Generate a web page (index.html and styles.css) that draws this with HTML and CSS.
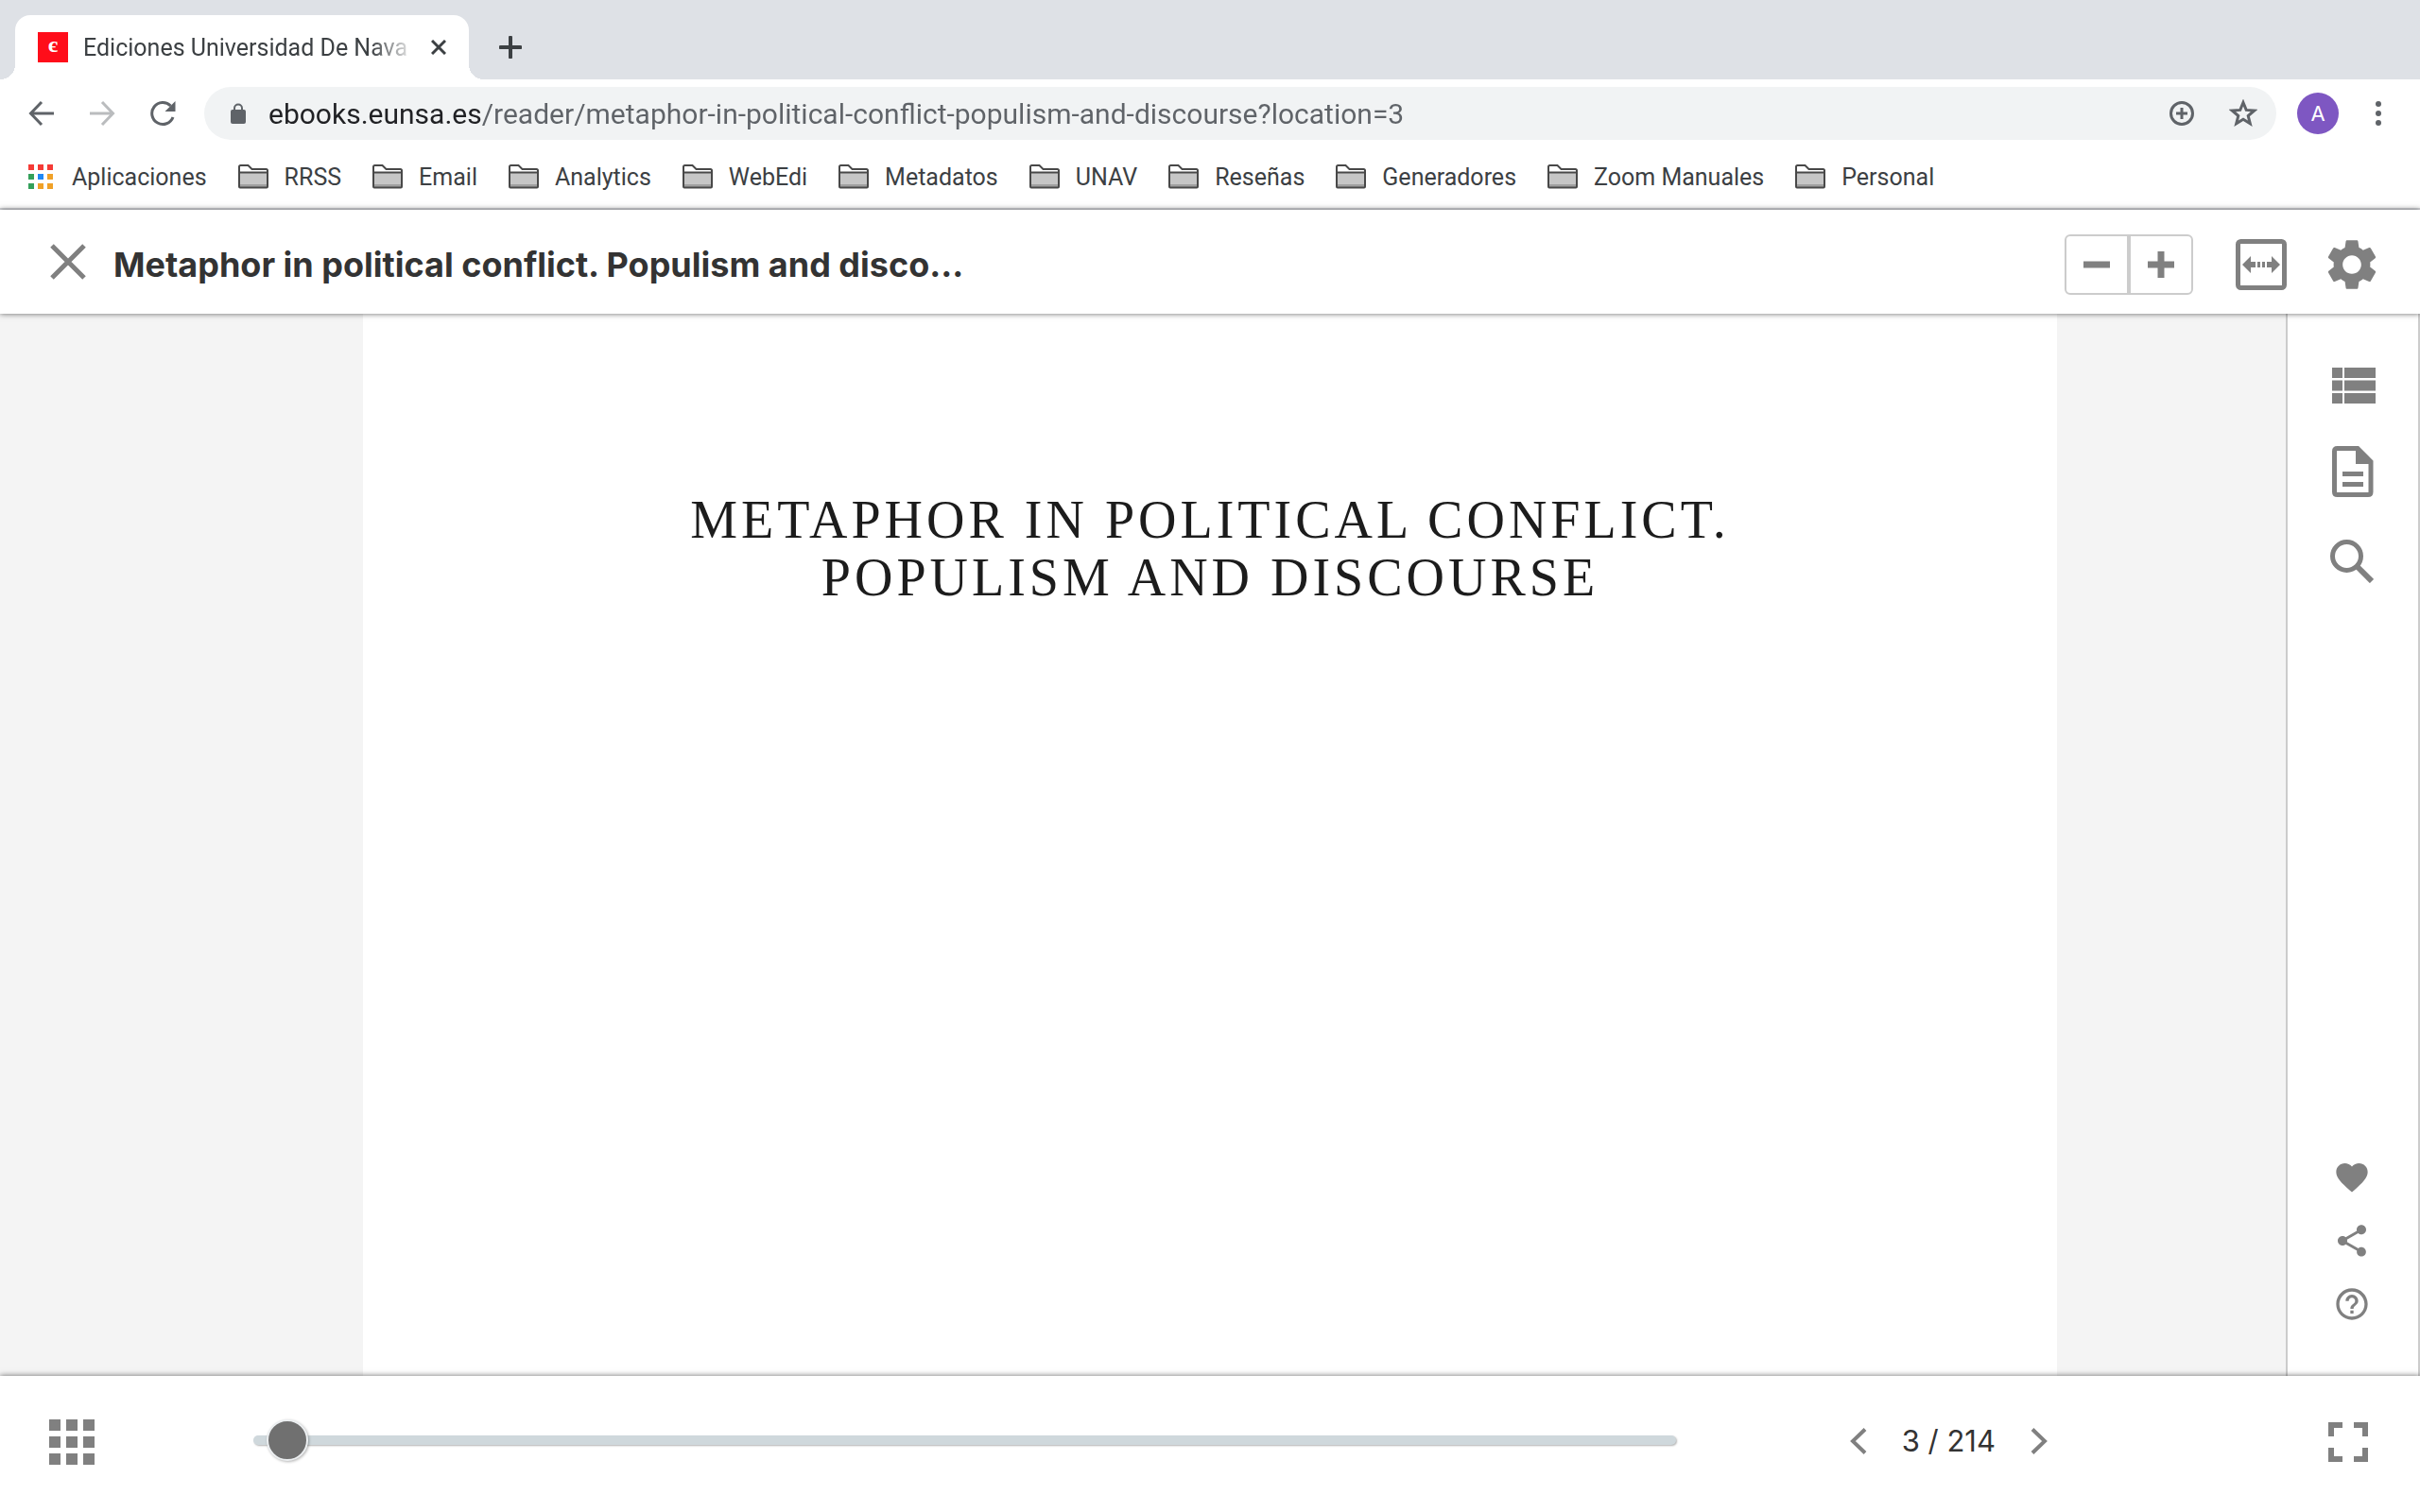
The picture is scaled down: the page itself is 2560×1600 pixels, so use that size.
FILE: index.html
```html
<!DOCTYPE html>
<html lang="es">
<head>
    <meta charset="UTF-8">
    <meta name="viewport" content="width=device-width, initial-scale=1.0">
    <title>Ediciones Universidad De Navarra</title>
    <link rel="stylesheet" href="styles.css">
</head>
<body>

    <!-- icons used more than once -->
    <svg width="0" height="0" class="sprite" aria-hidden="true">
        <symbol id="folder" viewBox="0 0 32 26">
            <path d="M1 24V2.500Q1 1 2.500 1H10.500L14.500 4H29.500Q31 4 31 5.500V24Z" fill="#fff"/>
            <path d="M1 9H31V24H1Z" fill="#c6c6c6"/>
            <path d="M1 21H31V24H1Z" fill="#a0a0a0"/>
            <path d="M1 8.500H31M1 23.500V2.500Q1 1 2.500 1H10.500L14.500 5H29.500Q31 5 31 6.500V23.500Q31 24.500 30 24.500H2Q1 24.500 1 23.500Z" fill="none" stroke="#484848" stroke-width="2"/>
        </symbol>
    </svg>

    <div class="tab-strip">
        <div class="tab">
            <span class="favicon">є</span>
            <span class="tab-title">Ediciones Universidad De Nava</span>
            <button class="tab-close" aria-label="Cerrar pestaña">
                <svg width="16" height="16" viewBox="0 0 16 16"><path d="M1 1L15 15M15 1L1 15" stroke="#3c4043" stroke-width="3"/></svg>
            </button>
        </div>
        <button class="new-tab" aria-label="Nueva pestaña">
            <svg width="24" height="24" viewBox="0 0 24 24"><path d="M12 1.500V22.500M1.500 12H22.500" stroke="#3c4043" stroke-width="4" stroke-linecap="round"/></svg>
        </button>
    </div>

    <div class="toolbar">
        <button aria-label="Atrás">
            <svg width="28" height="28" viewBox="0 0 28 28"><path d="M27 14H3M14 2L2.500 14L14 26" fill="none" stroke="#5f6368" stroke-width="3"/></svg>
        </button>
        <button aria-label="Adelante">
            <svg width="28" height="28" viewBox="0 0 28 28"><path d="M1 14H25M14 2L25.500 14L14 26" fill="none" stroke="#babcbe" stroke-width="3"/></svg>
        </button>
        <button aria-label="Recargar">
            <svg width="28" height="28" viewBox="0 0 28 28"><path d="M25 18A11.500 11.500 0 1 1 22.500 6" fill="none" stroke="#5f6368" stroke-width="3"/><path d="M27.500 1V12H16.500Z" fill="#5f6368"/></svg>
        </button>
        <div class="omnibox">
            <svg width="16" height="22" viewBox="0 0 16 22"><path d="M4 9V5.500a4 4 0 0 1 8 0V9" fill="none" stroke="#5f6368" stroke-width="2"/><rect y="7" width="16" height="15" rx="2" fill="#5f6368"/></svg>
            <input class="url" type="text" aria-label="Dirección" value="ebooks.eunsa.es/reader/metaphor-in-political-conflict-populism-and-discourse?location=3">
            <button aria-label="Zoom">
                <svg width="28" height="28" viewBox="0 0 28 28"><circle cx="14" cy="14" r="11.500" fill="none" stroke="#5f6368" stroke-width="3"/><path d="M14 8V20M8 14H20" stroke="#5f6368" stroke-width="3"/></svg>
            </button>
            <button aria-label="Añadir a marcadores">
                <svg width="30" height="30" viewBox="0 0 30 30"><path d="M15 3.500L18.200 11.400L26.700 12L20.200 17.500L22.300 25.800L15 21.300L7.700 25.800L9.800 17.500L3.300 12L11.800 11.400Z" fill="none" stroke="#5f6368" stroke-width="3"/></svg>
            </button>
        </div>
        <button class="avatar" aria-label="Perfil">A</button>
        <button class="menu" aria-label="Menú">
            <svg width="8" height="28" viewBox="0 0 8 28" fill="#5f6368"><circle cx="4" cy="4" r="3"/><circle cx="4" cy="14" r="3"/><circle cx="4" cy="24" r="3"/></svg>
        </button>
    </div>

    <nav class="bookmarks">
        <a href="#">
            <svg class="apps" width="26" height="26" viewBox="0 0 26 26">
                <path d="M0 0h6v6H0zM10 0h6v6h-6zM20 0h6v6h-6z" fill="#f53b36"/>
                <path d="M0 10h6v6H0zM0 20h6v6H0z" fill="#34a05a"/>
                <path d="M10 10h6v6h-6z" fill="#2088f5"/>
                <path d="M20 10h6v6h-6zM10 20h6v6h-6zM20 20h6v6h-6z" fill="#f0a128"/>
            </svg>Aplicaciones</a>
        <a href="#"><svg class="folder"><use href="#folder"/></svg>RRSS</a>
        <a href="#"><svg class="folder"><use href="#folder"/></svg>Email</a>
        <a href="#"><svg class="folder"><use href="#folder"/></svg>Analytics</a>
        <a href="#"><svg class="folder"><use href="#folder"/></svg>WebEdi</a>
        <a href="#"><svg class="folder"><use href="#folder"/></svg>Metadatos</a>
        <a href="#"><svg class="folder"><use href="#folder"/></svg>UNAV</a>
        <a href="#"><svg class="folder"><use href="#folder"/></svg>Reseñas</a>
        <a href="#"><svg class="folder"><use href="#folder"/></svg>Generadores</a>
        <a href="#"><svg class="folder"><use href="#folder"/></svg>Zoom Manuales</a>
        <a href="#"><svg class="folder"><use href="#folder"/></svg>Personal</a>
    </nav>

    <header class="reader-header">
        <button class="close" aria-label="Cerrar">
            <svg width="38" height="38" viewBox="0 0 38 38"><path d="M2 2L36 36M36 2L2 36" stroke="#808080" stroke-width="5"/></svg>
        </button>
        <h1>Metaphor in political conflict. Populism and disco...</h1>
        <div class="zoom">
            <button aria-label="Reducir">
                <svg width="28" height="28" viewBox="0 0 28 28"><path d="M0 14H28" stroke="#808080" stroke-width="7"/></svg>
            </button>
            <button aria-label="Ampliar">
                <svg width="28" height="28" viewBox="0 0 28 28"><path d="M0 14H28M14 0V28" stroke="#808080" stroke-width="7"/></svg>
            </button>
        </div>
        <button class="fit" aria-label="Ajustar al ancho">
            <svg width="54" height="54" viewBox="0 0 54 54" fill="#808080">
                <rect x="2.500" y="2.500" width="49" height="49" rx="3" fill="none" stroke="#808080" stroke-width="5"/>
                <path d="M7 27L16 18V24H21V30H16V36ZM47 27L38 18V24H33V30H38V36ZM23 24h3v6h-3zM28 24h3v6h-3z"/>
            </svg>
        </button>
        <button class="settings" aria-label="Ajustes">
            <svg width="62" height="62" viewBox="0 0 24 24" fill="#808080"><path d="M19.430 12.980c.04-.32.07-.64.07-.98s-.03-.66-.07-.98l2.110-1.650c.19-.15.24-.42.12-.64l-2-3.460c-.12-.22-.39-.3-.61-.22l-2.490 1c-.52-.4-1.080-.73-1.690-.98l-.38-2.650C14.460 2.180 14.250 2 14 2h-4c-.25 0-.46.18-.49.42l-.38 2.650c-.61.25-1.170.59-1.690.98l-2.490-1c-.23-.09-.49 0-.61.22l-2 3.460c-.13.22-.07.49.12.64l2.110 1.650c-.04.32-.07.65-.07.98s.03.66.07.98l-2.110 1.650c-.19.15-.24.42-.12.64l2 3.460c.12.22.39.3.61.22l2.490-1c.52.4 1.080.73 1.690.98l.38 2.650c.03.24.24.42.49.42h4c.25 0 .46-.18.49-.42l.38-2.650c.61-.25 1.170-.59 1.690-.98l2.490 1c.23.09.49 0 .61-.22l2-3.460c.12-.22.07-.49-.12-.64l-2.110-1.650zM12 15.800c-2.100 0-3.800-1.700-3.800-3.800s1.700-3.800 3.800-3.800 3.800 1.700 3.800 3.800-1.700 3.800-3.800 3.800z"/></svg>
        </button>
    </header>

    <main class="viewer">
        <article class="page">
            <h2>METAPHOR IN POLITICAL CONFLICT.<br>POPULISM AND DISCOURSE</h2>
        </article>
        <aside class="side">
            <div class="side-top">
                <button aria-label="Índice">
                    <svg width="50" height="38" viewBox="-4 0 50 38" fill="#808080"><path d="M0 0h11v11H0zM13 0h33v11H13zM0 13.500h11v11H0zM13 13.500h33v11H13zM0 27h11v11H0zM13 27h33v11H13z"/></svg>
                </button>
                <button aria-label="Notas">
                    <svg width="46" height="54" viewBox="-2 0 46 54">
                        <path d="M27 2.500H5.500Q2.500 2.500 2.500 5.500V48.500Q2.500 51.500 5.500 51.500H38Q41 51.500 41 48.500V16.500Z" fill="none" stroke="#808080" stroke-width="5"/>
                        <path d="M25 1.500V19H42V16L28 1.500ZM11 27H33V32H11ZM11 38H33V43H11Z" fill="#808080"/>
                    </svg>
                </button>
                <button aria-label="Buscar">
                    <svg width="46" height="46" viewBox="0 0 46 46" fill="none" stroke="#808080"><circle cx="17.500" cy="17.500" r="15" stroke-width="5"/><path d="M28 28L44 44" stroke-width="6"/></svg>
                </button>
            </div>
            <div class="side-bottom">
                <button aria-label="Favorito">
                    <svg width="40" height="40" viewBox="0 0 24 24" fill="#808080"><path d="M12 21.350l-1.450-1.320C5.400 15.360 2 12.280 2 8.500 2 5.420 4.420 3 7.500 3c1.740 0 3.410.81 4.500 2.090C13.090 3.810 14.760 3 16.500 3 19.580 3 22 5.420 22 8.500c0 3.780-3.400 6.860-8.550 11.540L12 21.350z"/></svg>
                </button>
                <button aria-label="Compartir">
                    <svg width="40" height="40" viewBox="0 0 24 24" fill="#808080"><path d="M18 16.080c-.76 0-1.440.3-1.960.77L8.910 12.700c.05-.23.09-.46.09-.7s-.04-.47-.09-.7l7.050-4.110c.54.5 1.250.81 2.040.81 1.660 0 3-1.340 3-3s-1.340-3-3-3-3 1.340-3 3c0 .24.04.47.09.7L8.040 9.810C7.500 9.310 6.790 9 6 9c-1.660 0-3 1.340-3 3s1.340 3 3 3c.79 0 1.500-.31 2.040-.81l7.120 4.160c-.05.21-.08.43-.08.65 0 1.610 1.310 2.920 2.920 2.920s2.920-1.310 2.920-2.920-1.310-2.920-2.920-2.920z"/></svg>
                </button>
                <button aria-label="Ayuda">
                    <svg width="40" height="40" viewBox="0 0 24 24" fill="#808080"><path d="M11 18h2v-2h-2v2zm1-16C6.480 2 2 6.480 2 12s4.480 10 10 10 10-4.480 10-10S17.520 2 12 2zm0 18c-4.410 0-8-3.590-8-8s3.590-8 8-8 8 3.590 8 8-3.590 8-8 8zm0-14c-2.210 0-4 1.790-4 4h2c0-1.100.9-2 2-2s2 .9 2 2c0 2-3 1.750-3 5h2c0-2.250 3-2.500 3-5 0-2.210-1.790-4-4-4z"/></svg>
                </button>
            </div>
        </aside>
    </main>

    <footer class="reader-footer">
        <button aria-label="Miniaturas">
            <svg width="48" height="48" viewBox="0 0 48 48" fill="#808080"><path d="M0 0h12v12H0zM18 0h12v12H18zM36 0h12v12H36zM0 18h12v12H0zM18 18h12v12H18zM36 18h12v12H36zM0 36h12v12H0zM18 36h12v12H18zM36 36h12v12H36z"/></svg>
        </button>
        <input class="slider" type="range" min="1" max="214" value="3" aria-label="Página">
        <div class="pager">
            <button aria-label="Anterior">
                <svg width="18" height="28" viewBox="0 0 18 28"><path d="M16 1.500L3 14L16 26.500" fill="none" stroke="#808080" stroke-width="4"/></svg>
            </button>
            <span class="count">3 / 214</span>
            <button aria-label="Siguiente">
                <svg width="18" height="28" viewBox="0 0 18 28"><path d="M2 1.500L15 14L2 26.500" fill="none" stroke="#808080" stroke-width="4"/></svg>
            </button>
        </div>
        <button class="fullscreen" aria-label="Pantalla completa">
            <svg width="42" height="42" viewBox="0 0 42 42"><path d="M3 15V3H15M27 3H39V15M39 27V39H27M15 39H3V27" fill="none" stroke="#808080" stroke-width="6"/></svg>
        </button>
    </footer>

</body>
</html>
```
FILE: styles.css
```css
* {
    box-sizing: border-box;
}

body {
    margin: 0;
    height: 100vh;
    display: flex;
    flex-direction: column;
    background: #fff;
    color: #333;
    font-family: Inter, "Liberation Sans", sans-serif;
}

button {
    display: flex;
    align-items: center;
    justify-content: center;
    flex: none;
    margin: 0;
    padding: 0;
    border: none;
    background: none;
    font: inherit;
    cursor: pointer;
}

svg {
    display: block;
    flex: none;
}

.sprite {
    position: absolute;
}

/* Browser tabs */
.tab-strip {
    display: flex;
    align-items: flex-end;
    height: 84px;
    padding-left: 16px;
    background: #dee1e6;
}

.tab {
    position: relative;
    display: flex;
    align-items: center;
    width: 480px;
    height: 68px;
    padding: 0 24px;
    border-radius: 16px 16px 0 0;
    background: #fff;
}

.tab::before,
.tab::after {
    content: "";
    position: absolute;
    bottom: 0;
    width: 16px;
    height: 16px;
}

.tab::before {
    right: 100%;
    background: radial-gradient(circle at 0 0, transparent 16px, #fff 16px);
}

.tab::after {
    left: 100%;
    background: radial-gradient(circle at 100% 0, transparent 16px, #fff 16px);
}

.favicon {
    width: 32px;
    height: 32px;
    background: #ff0d1a;
    color: #fff;
    font: bold 24px/26px "Liberation Serif", serif;
    text-align: center;
}

.tab-title {
    flex: 1;
    margin: 0 16px;
    white-space: nowrap;
    color: #3c4043;
    font-family: Roboto, sans-serif;
    font-size: 25px;
    -webkit-mask-image: linear-gradient(to left, transparent, #000 48px);
    mask-image: linear-gradient(to left, transparent, #000 48px);
}

.new-tab {
    height: 68px;
    margin-left: 32px;
}

/* Address bar */
.toolbar {
    display: flex;
    align-items: center;
    gap: 36px;
    padding: 8px 40px 8px 30px;
}

.omnibox {
    flex: 1;
    display: flex;
    align-items: center;
    gap: 36px;
    height: 56px;
    margin-left: -6px;
    padding: 0 20px 0 28px;
    border-radius: 28px;
    background: #f1f3f4;
}

.url {
    flex: 1;
    min-width: 0;
    margin-left: -12px;
    padding: 0;
    border: none;
    outline: none;
    font-family: Roboto, sans-serif;
    font-size: 30px;
    /* host is darker than the path */
    background: linear-gradient(to right, #202124 226px, #5f6368 226px);
    -webkit-background-clip: text;
    background-clip: text;
    color: transparent;
}

.avatar {
    width: 44px;
    height: 44px;
    margin: 0 2px 0 -14px;
    border-radius: 50%;
    background: #7e57c2;
    color: #fff;
    font-size: 22px;
}

/* Bookmarks */
.bookmarks {
    display: flex;
    align-items: center;
    gap: 33px;
    height: 66px;
    padding: 0 30px 2px;
    border-bottom: 2px solid #dadce0;
}

.bookmarks a {
    display: flex;
    align-items: center;
    gap: 17px;
    color: #3c4043;
    font-family: Roboto, sans-serif;
    font-size: 25px;
    text-decoration: none;
}

.folder {
    width: 32px;
    height: 26px;
}

.apps {
    margin-right: 3px;
}

/* Reader */
.reader-header {
    position: relative;
    z-index: 1;
    display: flex;
    align-items: center;
    height: 110px;
    padding: 6px 41px 0 53px;
    background: #fff;
    box-shadow: 0 0 6px rgba(0, 0, 0, 0.6);
}

.close {
    padding-bottom: 6px;
}

.reader-header h1 {
    margin: 0 auto 0 29px;
    font-size: 36px;
    font-weight: 700;
    line-height: 48px;
}

.zoom {
    display: flex;
}

.zoom button {
    width: 68px;
    height: 64px;
    border: 2px solid #ccc;
}

.zoom button:first-child {
    border-radius: 6px 0 0 6px;
}

.zoom button:last-child {
    border-radius: 0 6px 6px 0;
}

.fit {
    margin: 0 38px 0 45px;
}

.viewer {
    flex: 1;
    display: flex;
    min-height: 0;
    background: #f4f4f4;
}

.page {
    width: 70%;
    margin-left: 15%;
    padding-top: 188px;
    background: #fff;
}

.page h2 {
    margin: 0;
    color: #1c1c1c;
    font-family: "Liberation Serif", serif;
    font-size: 56px;
    font-weight: normal;
    line-height: 61px;
    letter-spacing: 4px;
    text-align: center;
}

.side {
    display: flex;
    flex-direction: column;
    justify-content: space-between;
    width: 142px;
    margin-left: auto;
    padding: 57px 2px 56px 0;
    border: solid #ccc;
    border-width: 0 2px;
    background: #fff;
}

.side-top,
.side-bottom {
    display: flex;
    flex-direction: column;
    align-items: center;
}

.side-top {
    gap: 45px;
}

.side-bottom {
    gap: 27px;
}

.reader-footer {
    position: relative;
    z-index: 1;
    display: flex;
    align-items: center;
    height: 144px;
    padding: 0 55px 4px 52px;
    background: #fff;
    box-shadow: 0 0 6px rgba(0, 0, 0, 0.6);
}

.slider {
    -webkit-appearance: none;
    appearance: none;
    flex: 1;
    height: 44px;
    margin: 0 184px 4px 168px;
    background: none;
}

.slider::-webkit-slider-runnable-track {
    height: 10px;
    border-radius: 5px;
    background: #cfd8dc;
    box-shadow: 1px 1px 2px rgba(0, 0, 0, 0.3);
}

.slider::-webkit-slider-thumb {
    -webkit-appearance: none;
    width: 44px;
    height: 44px;
    margin-top: -17px;
    border: 2px solid #eceff1;
    border-radius: 50%;
    background: #707070;
    box-shadow: 1px 1px 3px rgba(0, 0, 0, 0.3);
}

.pager {
    display: flex;
    align-items: center;
    gap: 37px;
    padding-bottom: 2px;
}

.count {
    font-size: 31px;
    line-height: 40px;
}

.fullscreen {
    margin-left: 297px;
}
```
